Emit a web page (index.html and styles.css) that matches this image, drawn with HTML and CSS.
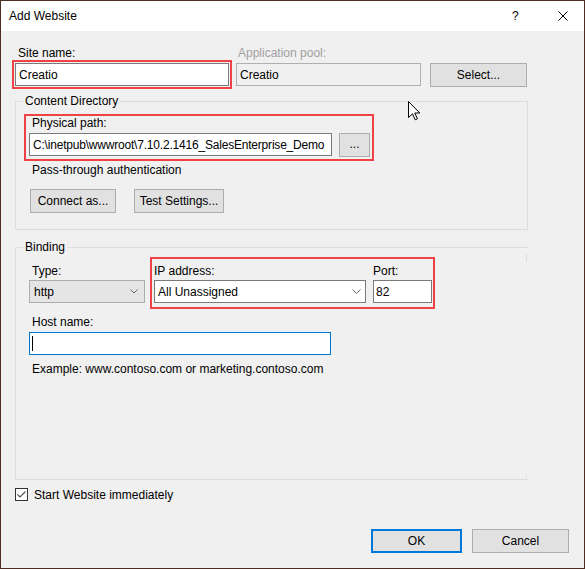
FILE: index.html
```html
<!DOCTYPE html>
<html>
<head>
<meta charset="utf-8">
<title>Add Website</title>
<link rel="stylesheet" href="styles.css">
</head>
<body>
<div class="window">
  <div class="titlebar">
    <span class="title">Add Website</span>
    <span class="help">?</span>
    <svg class="close" width="10" height="10" viewBox="0 0 10 10"><path d="M0.5 0.5 L9.5 9.5 M9.5 0.5 L0.5 9.5" stroke="#000" stroke-width="1" fill="none"/></svg>
  </div>
  <div class="content">
    <div class="row-top">
      <div class="col-site">
        <div class="lbl lbl-site">Site name:</div>
        <div class="hl hl-site"><div class="tb tb-site">Creatio</div></div>
      </div>
      <div class="col-pool">
        <div class="lbl lbl-pool">Application pool:</div>
        <div class="tb tb-pool">Creatio</div>
      </div>
      <div class="btn btn-select">Select...</div>
    </div>

    <fieldset class="group group-content">
      <legend>Content Directory</legend>
      <div class="body-content">
        <div class="hl hl-path">
          <div class="lbl">Physical path:</div>
          <div class="path-row">
            <div class="tb tb-path">C:\inetpub\wwwroot\7.10.2.1416_SalesEnterprise_Demo</div>
            <div class="btn btn-browse">...</div>
          </div>
        </div>
        <div class="lbl pass">Pass-through authentication</div>
        <div class="btn-row">
          <div class="btn btn-connect">Connect as...</div>
          <div class="btn btn-test">Test Settings...</div>
        </div>
      </div>
    </fieldset>

    <fieldset class="group group-binding">
      <legend>Binding</legend>
      <div class="body-binding">
        <div class="bind-row">
          <div class="col-type">
            <div class="lbl lbl-type">Type:</div>
            <div class="combo combo-type"><span>http</span><svg width="8" height="5" viewBox="0 0 8 5"><polyline points="0.5,0.5 4,4 7.5,0.5" fill="none" stroke="#606060" stroke-width="1"/></svg></div>
          </div>
          <div class="hl hl-ip">
            <div class="col-ip">
              <div class="lbl">IP address:</div>
              <div class="combo combo-ip"><span>All Unassigned</span><svg width="9" height="5" viewBox="0 0 9 5"><polyline points="0.5,0.5 4.5,4.5 8.5,0.5" fill="none" stroke="#606060" stroke-width="1"/></svg></div>
            </div>
            <div class="col-port">
              <div class="lbl">Port:</div>
              <div class="tb tb-port">82</div>
            </div>
          </div>
        </div>
        <div class="lbl lbl-host">Host name:</div>
        <div class="tb tb-host"><span class="caret"></span></div>
        <div class="lbl example">Example: www.contoso.com or marketing.contoso.com</div>
      </div>
    </fieldset>

    <div class="check-row">
      <svg class="checkbox" width="13" height="13" viewBox="0 0 13 13"><rect x="0.5" y="0.5" width="12" height="12" fill="#ffffff" stroke="#333333"/><polyline points="2.5,6.5 5,9 10.5,3.5" fill="none" stroke="#555555" stroke-width="1.2"/></svg>
      <span class="check-label">Start Website immediately</span>
    </div>

    <div class="dialog-buttons">
      <div class="btn btn-ok">OK</div>
      <div class="btn btn-cancel">Cancel</div>
    </div>

    <svg class="cursor" width="13" height="20" viewBox="0 0 13 20"><path d="M0.5 0.5 L0.5 16.5 L4.5 12.8 L7.2 18.8 L9.4 17.8 L6.8 12 L11.8 12 Z" fill="#ffffff" stroke="#000000" stroke-width="1" stroke-linejoin="miter"/></svg>
  </div>
</div>
</body>
</html>
```

FILE: styles.css
```css
html, body {
  margin: 0;
  padding: 0;
}
body {
  background: #f0f0f0;
  font-family: "Liberation Sans", Arial, sans-serif;
  font-size: 12px;
  color: #000;
}
.window {
  width: 585px;
  height: 569px;
  box-sizing: border-box;
  border: 1px solid #4e2e22;
  background: #f0f0f0;
  display: flex;
  flex-direction: column;
  overflow: hidden;
}
.titlebar {
  height: 30px;
  flex: 0 0 30px;
  background: #ffffff;
  display: flex;
  align-items: center;
  line-height: 14px;
}
.title {
  padding-left: 8px;
  flex: 1;
}
.help {
  width: 7px;
  margin-right: 39px;
}
.close {
  margin-right: 16px;
  display: block;
}
.content {
  flex: 1;
  position: relative;
}
.lbl {
  line-height: 14px;
  height: 14px;
  white-space: nowrap;
}
.hl {
  border: 2px solid #ef4146;
}
.tb {
  box-sizing: border-box;
  height: 23px;
  border: 1px solid #7a7a7a;
  background: #ffffff;
  padding-left: 3px;
  display: flex;
  align-items: center;
  white-space: nowrap;
  overflow: hidden;
}
.btn {
  box-sizing: border-box;
  height: 24px;
  border: 1px solid #adadad;
  background: #e1e1e1;
  display: flex;
  align-items: center;
  justify-content: center;
  white-space: nowrap;
}
.combo {
  box-sizing: border-box;
  height: 23px;
  display: flex;
  align-items: center;
  justify-content: space-between;
  white-space: nowrap;
}
.combo svg {
  display: block;
}

/* top row */
.row-top {
  display: flex;
  align-items: flex-start;
  margin-top: 15px;
}
.col-site {
  margin-left: 11px;
  width: 220px;
}
.lbl-site {
  padding-left: 6px;
}
.hl-site {
  padding: 1px;
}
.tb-site {
  width: 214px;
}
.col-pool {
  margin-left: 4px;
  width: 185px;
}
.lbl-pool {
  padding-left: 2px;
  color: #a0a0a0;
}
.tb-pool {
  margin-top: 3px;
  width: 185px;
  background: #f0f0f0;
  border-color: #b0b0b0;
  padding-left: 3px;
}
.btn-select {
  margin-left: 9px;
  margin-top: 17px;
  width: 97px;
}

/* group boxes */
.group {
  margin: 0 0 0 14px;
  padding: 0;
  width: 513px;
  box-sizing: border-box;
  border: 1px solid #dcdcdc;
  min-width: 0;
}
.group legend {
  padding: 0 2px;
  margin-left: 7px;
  line-height: 14px;
  height: 14px;
}
.group-content {
  margin-top: 5px;
}
.body-content {
  height: 121px;
  box-sizing: border-box;
  padding-top: 6px;
}
.hl-path {
  margin-left: 8px;
  width: 350px;
  box-sizing: border-box;
  padding: 0 2px 2px 3px;
}
.hl-path .lbl {
  padding-left: 3px;
}
.path-row {
  display: flex;
  align-items: flex-start;
  margin-top: 3px;
}
.tb-path {
  width: 303px;
  letter-spacing: -0.2px;
}
.btn-browse {
  margin-left: 7px;
  width: 31px;
  padding-bottom: 3px;
}
.pass {
  margin-top: 2px;
  padding-left: 16px;
}
.btn-row {
  display: flex;
  margin-top: 12px;
  margin-left: 14px;
}
.btn-connect {
  width: 86px;
}
.btn-test {
  margin-left: 18px;
  width: 90px;
}

.group-binding {
  margin-top: 10px;
  border-right-color: transparent;
}
.body-binding {
  height: 225px;
  box-sizing: border-box;
  padding-top: 3px;
  background:
    linear-gradient(#dcdcdc, #dcdcdc) right top / 1px 8px no-repeat,
    linear-gradient(#dcdcdc, #dcdcdc) right bottom / 1px 4px no-repeat;
}
.bind-row {
  display: flex;
  align-items: flex-start;
}
.col-type {
  margin-left: 13px;
  margin-top: 7px;
}
.lbl-type {
  padding-left: 3px;
}
.combo-type {
  margin-top: 2px;
  width: 116px;
  border: 1px solid #adadad;
  background: #e5e5e5;
  padding: 0 6px 0 4px;
}
.hl-ip {
  margin-left: 5px;
  display: flex;
  align-items: flex-start;
  padding: 5px 1px 4px 2px;
}
.combo-ip {
  margin-top: 2px;
  width: 212px;
  border: 1px solid #7a7a7a;
  background: #ffffff;
  padding: 0 4px 0 3px;
}
.col-port {
  margin-left: 7px;
}
.tb-port {
  margin-top: 2px;
  width: 59px;
  padding-left: 2px;
}
.lbl-host {
  margin-top: 6px;
  padding-left: 16px;
}
.tb-host {
  margin: 3px 0 0 13px;
  width: 302px;
  border-color: #0078d7;
  padding-left: 2px;
}
.caret {
  display: block;
  width: 1px;
  height: 15px;
  background: #000;
}
.example {
  margin-top: 7px;
  padding-left: 16px;
}

/* checkbox + dialog buttons */
.check-row {
  display: flex;
  align-items: center;
  margin: 8px 0 0 14px;
  height: 13px;
}
.checkbox {
  display: block;
}
.check-label {
  margin-left: 6px;
  line-height: 14px;
}
.dialog-buttons {
  display: flex;
  justify-content: flex-end;
  margin-top: 28px;
  padding-right: 15px;
}
.btn-ok {
  width: 91px;
  border: 2px solid #0078d7;
}
.btn-cancel {
  margin-left: 10px;
  width: 97px;
}
.cursor {
  position: absolute;
  left: 407px;
  top: 70px;
}
```
